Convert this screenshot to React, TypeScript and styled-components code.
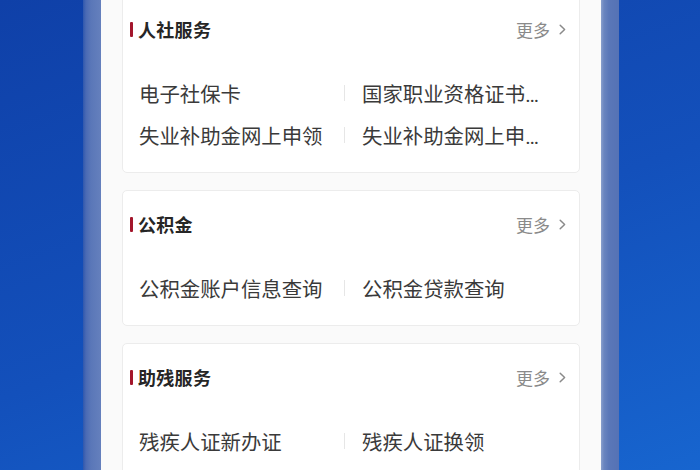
import React from "react";
import styled, { createGlobalStyle } from "styled-components";

const GlobalStyle = createGlobalStyle`
  html, body {
    margin: 0;
    padding: 0;
    width: 700px;
    height: 470px;
    overflow: hidden;
  }
  body {
    font-family: Roboto, "Noto Sans CJK SC", sans-serif;
  }
`;

const Stage = styled.div`
  display: flex;
  width: 700px;
  height: 470px;
  overflow: hidden;
  background: linear-gradient(160deg, #0f40a8 0%, #1350bb 55%, #1765cf 100%);
`;

const Side = styled.div<{ $w: number }>`
  flex: 0 0 ${({ $w }) => $w}px;
`;

const Bezel = styled.div<{ $right?: boolean }>`
  flex: 0 0 18px;
  background: ${({ $right }) =>
    $right
      ? "linear-gradient(90deg, #8aa0cc 0px, #6a85bf 3px, #5a77b8 8px, #5572b5 18px)"
      : "linear-gradient(90deg, #2f57ad 0px, #4a6ab4 3px, #5a77b8 8px, #6580bd 18px)"};
`;

const Screen = styled.div`
  flex: 0 0 500px;
  background: #fafafa;
  padding: 0 21px;
  box-sizing: border-box;
`;

const List = styled.div`
  display: flex;
  flex-direction: column;
  gap: 17px;
  margin-top: -5px;
`;

const Card = styled.div`
  background: #ffffff;
  border: 1px solid #ececec;
  border-radius: 5px;
  padding: 21px 0 16px;
`;

const Header = styled.div`
  display: flex;
  align-items: center;
  justify-content: space-between;
  height: 24px;
  padding: 0 13px 0 7px;
`;

const Title = styled.div`
  display: flex;
  align-items: center;
  font-size: 18px;
  font-weight: 700;
  color: #262626;
  letter-spacing: 0.3px;
`;

const Bar = styled.span`
  width: 3px;
  height: 15px;
  background: #a3162c;
  margin-right: 5px;
  border-radius: 1px;
`;

const More = styled.div`
  display: flex;
  align-items: center;
  gap: 9px;
  font-size: 17px;
  color: #8a8a8a;
`;

const Rows = styled.div`
  margin-top: 31px;
`;

const Row = styled.div`
  display: flex;
  align-items: center;
  height: 42px;
`;

const Cell = styled.div<{ $right?: boolean }>`
  box-sizing: border-box;
  width: ${({ $right }) => ($right ? "200px" : "221px")};
  padding-left: ${({ $right }) => ($right ? "17px" : "16px")};
  font-size: 20.4px;
  color: #3a3a3a;
  white-space: nowrap;
  overflow: hidden;
  text-overflow: ellipsis;
`;

const Divider = styled.span`
  width: 1px;
  height: 16px;
  background: #e6e6e6;
`;

const Chevron = () => (
  <svg width="7" height="11" viewBox="0 0 7 11" fill="none">
    <path d="M1.2 1.2 L5.6 5.5 L1.2 9.8" stroke="#8a8a8a" strokeWidth="1.5" strokeLinecap="round" strokeLinejoin="round" />
  </svg>
);

type Section = { title: string; rows: [string, string][] };

const sections: Section[] = [
  {
    title: "人社服务",
    rows: [
      ["电子社保卡", "国家职业资格证书查询"],
      ["失业补助金网上申领", "失业补助金网上申领进度"],
    ],
  },
  { title: "公积金", rows: [["公积金账户信息查询", "公积金贷款查询"]] },
  {
    title: "助残服务",
    rows: [
      ["残疾人证新办证", "残疾人证换领"],
      ["残疾人两项补贴", "残疾人证挂失补办"],
    ],
  },
];

export default function App() {
  return (
    <>
      <GlobalStyle />
      <Stage>
        <Side $w={83} />
        <Bezel />
        <Screen>
          <List>
            {sections.map((s) => (
              <Card key={s.title}>
                <Header>
                  <Title>
                    <Bar />
                    {s.title}
                  </Title>
                  <More>
                    更多
                    <Chevron />
                  </More>
                </Header>
                <Rows>
                  {s.rows.map(([a, b]) => (
                    <Row key={a}>
                      <Cell>{a}</Cell>
                      <Divider />
                      <Cell $right>{b}</Cell>
                    </Row>
                  ))}
                </Rows>
              </Card>
            ))}
          </List>
        </Screen>
        <Bezel $right />
        <Side $w={81} />
      </Stage>
    </>
  );
}
